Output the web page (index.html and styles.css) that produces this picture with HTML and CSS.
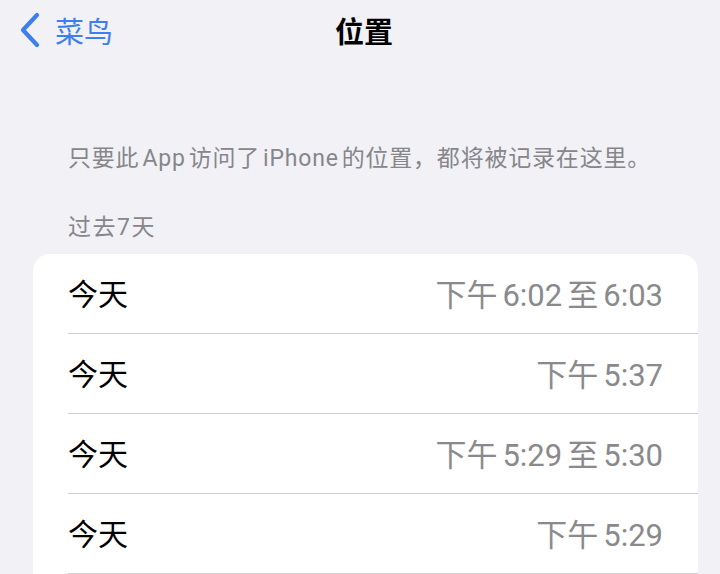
FILE: index.html
```html
<!DOCTYPE html>
<html lang="zh-Hans">
<head>
  <meta charset="UTF-8" />
  <title>位置</title>
  <link rel="stylesheet" href="styles.css">
</head>
<body>
  <div class="navbar">
    <a class="back">
      <svg class="chevron" width="24" height="36" viewBox="0 0 24 36">
        <path d="M19 3 L5 18 L19 33" fill="none" stroke="#3d7ff0" stroke-width="4.2" stroke-linecap="round" stroke-linejoin="round" />
      </svg>
      <span>菜鸟</span>
    </a>
    <div class="title">位置</div>
    <div></div>
  </div>

  <p class="intro">只要此<span class="latin">App</span>访问了<span class="latin">iPhone</span>的位置，都将被记录在这里。</p>
  <div class="section-title">过去7天</div>

  <div class="card">
    <div class="row"><span class="day">今天</span><span class="time">下午<b>6:02</b>至<b>6:03</b></span></div>
    <div class="row"><span class="day">今天</span><span class="time">下午<b>5:37</b></span></div>
    <div class="row"><span class="day">今天</span><span class="time">下午<b>5:29</b>至<b>5:30</b></span></div>
    <div class="row"><span class="day">今天</span><span class="time">下午<b>5:29</b></span></div>
  </div>
</body>
</html>
```

FILE: styles.css
```css
body {
  margin: 0;
  width: 720px;
  height: 574px;
  overflow: hidden;
  background-color: #f2f2f6;
  font-family: Roboto, "Noto Sans CJK SC", sans-serif;
  color: #000;
}

.navbar {
  height: 62px;
  display: grid;
  grid-template-columns: 1fr auto 1fr;
  align-items: center;
}

.back {
  display: flex;
  align-items: center;
  gap: 13px;
  padding-left: 18px;
  color: #3d7ff0;
  font-size: 29px;
  margin-top: -2px;
}

.title {
  font-size: 29px;
  font-weight: bold;
  margin-top: -2px;
  padding-left: 8px;
}

.intro {
  margin: 79px 0 0;
  padding-left: 68px;
  font-size: 23px;
  line-height: 36px;
  letter-spacing: 0.8px;
  color: #86868b;
}

.intro .latin {
  margin: 0 3px;
}

.section-title {
  margin-top: 36px;
  padding-left: 68px;
  font-size: 23px;
  line-height: 30px;
  letter-spacing: 1.5px;
  color: #86868b;
}

.card {
  margin: 11px 22px 0 33px;
  background: #fff;
  border-radius: 17px 17px 0 0;
}

.row {
  height: 79px;
  margin-left: 35px;
  padding-right: 35px;
  display: flex;
  justify-content: space-between;
  align-items: center;
  border-bottom: 1px solid #cfcfd3;
}

.day {
  font-size: 30px;
  margin-top: -3px;
}

.time {
  font-size: 31px;
  margin-top: -3px;
  color: #8a8a8e;
}

.time b {
  font-weight: normal;
  margin: 0 5px;
}

.time b:last-child {
  margin-right: 0;
}
```
